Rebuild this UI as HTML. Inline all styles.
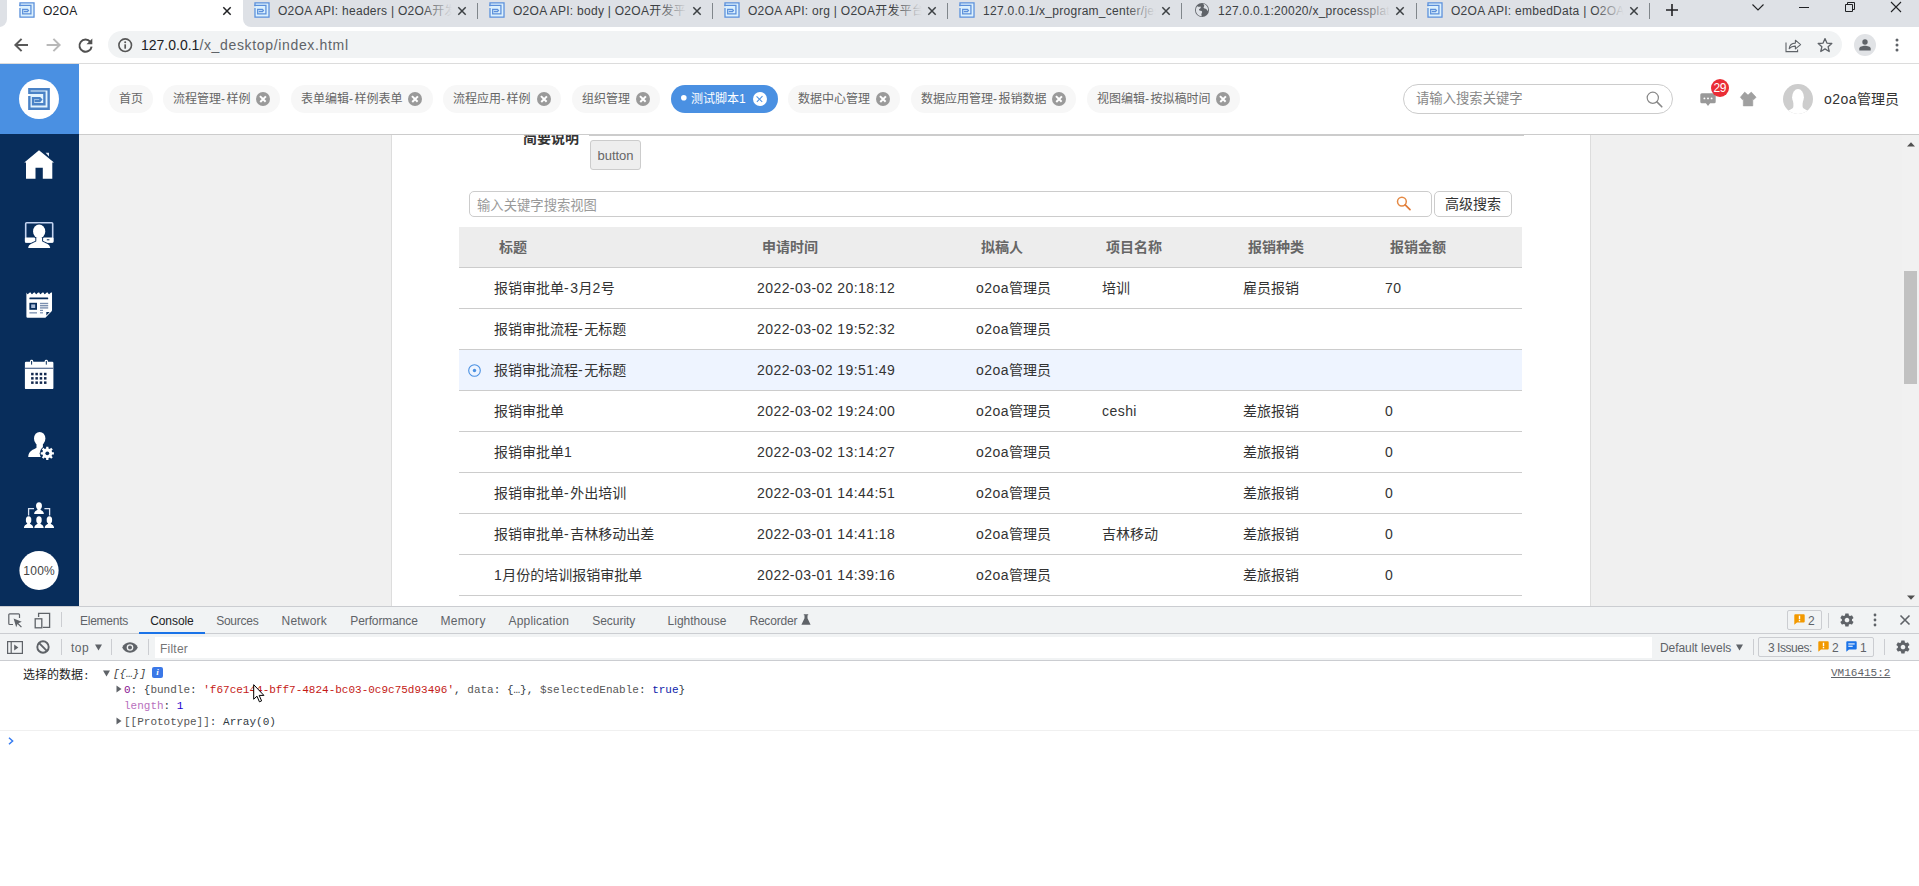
<!DOCTYPE html>
<html lang="zh-CN">
<head>
<meta charset="utf-8">
<title>O2OA</title>
<style>
*{box-sizing:border-box;margin:0;padding:0}
html,body{width:1919px;height:886px;overflow:hidden;background:#fff}
body{position:relative;font-family:"Liberation Sans","Noto Sans CJK SC",sans-serif;font-size:12px;color:#333}
.abs{position:absolute}
.t{position:absolute;white-space:nowrap;line-height:1}
svg{position:absolute;overflow:visible}

/* ===== browser chrome ===== */
#tabstrip{position:absolute;left:0;top:0;width:1919px;height:27px;background:#dee1e6}
#activetab{position:absolute;left:7px;top:-8px;width:236px;height:35px;background:#fff;border-radius:8px 8px 0 0}
.tabtxt{position:absolute;top:4px;font-size:12px;letter-spacing:0.27px;line-height:14px;color:#3c4043;white-space:nowrap;overflow:hidden;width:172px;height:14px}
.tabfade{position:absolute;top:0;width:30px;height:20px;background:linear-gradient(90deg,rgba(222,225,230,0),#dee1e6)}
.tabsep{position:absolute;top:3px;width:1px;height:16px;background:#80868b}
#toolbar{position:absolute;left:0;top:27px;width:1919px;height:36px;background:#fff}
#tbline{position:absolute;left:0;top:63px;width:1919px;height:1px;background:#dcdcdc}
#urlpill{position:absolute;left:108px;top:31px;width:1734px;height:27px;border-radius:14px;background:#f1f3f4}

/* ===== O2OA top bar ===== */
#logobox{position:absolute;left:0;top:64px;width:79px;height:70px;background:#4a90e2}
#topbar{position:absolute;left:79px;top:64px;width:1840px;height:70px;background:#fff}
#topline{position:absolute;left:79px;top:134px;width:1840px;height:1px;background:#ccc}
.pill{position:absolute;top:85px;height:28px;border-radius:14px;background:#f7f7f7;color:#666;font-size:12px;line-height:28px;white-space:nowrap;padding-left:10px}
.pill.on{background:#4a90e2;color:#fff}
.dot{display:inline-block;width:5.5px;height:5.5px;vertical-align:middle;margin:-3px 4.5px 0 0}
.px{position:absolute;top:7px;width:14px;height:14px;border-radius:50%;background:#9a9a9a}
.px:before,.px:after{content:"";position:absolute;left:6.2px;top:2.8px;width:1.6px;height:8.4px;background:#fff;transform:rotate(45deg)}
.px:after{transform:rotate(-45deg)}
.pill.on .px{background:#fff}
.pill.on .px:before,.pill.on .px:after{background:#4a90e2;width:1.2px;left:6.4px}

/* ===== sidebar ===== */
#sidebar{position:absolute;left:0;top:134px;width:79px;height:472px;background:#082d5b}

/* ===== content ===== */
#content{position:absolute;left:79px;top:135px;width:1825px;height:471px;background:#f0f0f0}
#paper{position:absolute;left:391px;top:135px;width:1200px;height:471px;background:#fff;border-left:1px solid #ddd;border-right:1px solid #ddd}
#vscroll{position:absolute;left:1902px;top:135px;width:17px;height:471px;background:#f1f1f1}
.row{position:absolute;left:459px;width:1063px;height:41px;border-bottom:1px solid #ccc;font-size:14px;color:#333}
.row .dt{letter-spacing:0.43px}
.l{font-style:normal;letter-spacing:0.45px}
.hy{font-style:normal;letter-spacing:1.5px}
.row span{position:absolute;top:0;line-height:40px;white-space:nowrap}

/* ===== devtools ===== */
#dt .bar{position:absolute;left:0;width:1919px;background:#f1f3f4}
#dt .ln{position:absolute;left:0;width:1919px;height:1px;background:#cbcdd1}
.dtab{position:absolute;top:8px;font-size:12px;line-height:14px;color:#5f6368;white-space:nowrap}
.vsep{position:absolute;width:1px;background:#cbcdd1}
.mono{position:absolute;white-space:pre;font-family:"Liberation Mono","Noto Sans CJK SC",monospace;font-size:11px;line-height:13px;color:#303942}

#dt{position:absolute;left:0;top:606px;width:1919px;height:280px;background:#fff}
</style>
</head>
<body>

<!-- ================= BROWSER TAB STRIP ================= -->
<div id="tabstrip">
  <div id="activetab"></div>
  <div class="abs" style="left:-1px;top:19px;width:8px;height:8px;background:#fff"><div style="width:8px;height:8px;background:#dee1e6;border-radius:0 0 8px 0"></div></div>
  <div class="abs" style="left:243px;top:19px;width:8px;height:8px;background:#fff"><div style="width:8px;height:8px;background:#dee1e6;border-radius:0 0 0 8px"></div></div>
  <svg style="left:19px;top:2px" width="16" height="16" viewBox="0 0 21.7 22"><rect x="0.8" y="0.8" width="20" height="20.4" fill="#dcf0fd"/><path d="M1.2,8.1V20.8H20.5V1.2H1.2V5.8M0,4.75H16.25V16.25H4.9V10.15H11.5L12.8,11.6L11.5,13.05H6.5" fill="none" stroke="#5b8fda" stroke-width="1.75"/></svg>
  <div class="tabtxt" style="left:43px;color:#202124">O2OA</div>
  <svg style="left:223px;top:6.5px" width="8" height="8" viewBox="0 0 8 8"><path d="M0.3,0.3L7.7,7.7M7.7,0.3L0.3,7.7" stroke="#202124" stroke-width="1.5" fill="none"/></svg>
  <svg style="left:254px;top:2px" width="16" height="16" viewBox="0 0 21.7 22"><rect x="0.8" y="0.8" width="20" height="20.4" fill="#dcf0fd"/><path d="M1.2,8.1V20.8H20.5V1.2H1.2V5.8M0,4.75H16.25V16.25H4.9V10.15H11.5L12.8,11.6L11.5,13.05H6.5" fill="none" stroke="#5b8fda" stroke-width="1.75"/></svg>
  <div class="tabtxt" style="left:278px;width:174px">O2OA API: headers | O2OA开发平台<span class="tabfade" style="right:0"></span></div>
  <svg style="left:458px;top:6.5px" width="8" height="8" viewBox="0 0 8 8"><path d="M0.3,0.3L7.7,7.7M7.7,0.3L0.3,7.7" stroke="#3c4043" stroke-width="1.5" fill="none"/></svg>
  <div class="tabsep" style="left:477px"></div>
  <svg style="left:489px;top:2px" width="16" height="16" viewBox="0 0 21.7 22"><rect x="0.8" y="0.8" width="20" height="20.4" fill="#dcf0fd"/><path d="M1.2,8.1V20.8H20.5V1.2H1.2V5.8M0,4.75H16.25V16.25H4.9V10.15H11.5L12.8,11.6L11.5,13.05H6.5" fill="none" stroke="#5b8fda" stroke-width="1.75"/></svg>
  <div class="tabtxt" style="left:513px;width:174px">O2OA API: body | O2OA开发平台<span class="tabfade" style="right:0"></span></div>
  <svg style="left:693px;top:6.5px" width="8" height="8" viewBox="0 0 8 8"><path d="M0.3,0.3L7.7,7.7M7.7,0.3L0.3,7.7" stroke="#3c4043" stroke-width="1.5" fill="none"/></svg>
  <div class="tabsep" style="left:712px"></div>
  <svg style="left:724px;top:2px" width="16" height="16" viewBox="0 0 21.7 22"><rect x="0.8" y="0.8" width="20" height="20.4" fill="#dcf0fd"/><path d="M1.2,8.1V20.8H20.5V1.2H1.2V5.8M0,4.75H16.25V16.25H4.9V10.15H11.5L12.8,11.6L11.5,13.05H6.5" fill="none" stroke="#5b8fda" stroke-width="1.75"/></svg>
  <div class="tabtxt" style="left:748px;width:174px">O2OA API: org | O2OA开发平台<span class="tabfade" style="right:0"></span></div>
  <svg style="left:928px;top:6.5px" width="8" height="8" viewBox="0 0 8 8"><path d="M0.3,0.3L7.7,7.7M7.7,0.3L0.3,7.7" stroke="#3c4043" stroke-width="1.5" fill="none"/></svg>
  <div class="tabsep" style="left:947px"></div>
  <svg style="left:959px;top:2px" width="16" height="16" viewBox="0 0 21.7 22"><rect x="0.8" y="0.8" width="20" height="20.4" fill="#dcf0fd"/><path d="M1.2,8.1V20.8H20.5V1.2H1.2V5.8M0,4.75H16.25V16.25H4.9V10.15H11.5L12.8,11.6L11.5,13.05H6.5" fill="none" stroke="#5b8fda" stroke-width="1.75"/></svg>
  <div class="tabtxt" style="left:983px;width:173px">127.0.0.1/x_program_center/jest/index.html<span class="tabfade" style="right:0"></span></div>
  <svg style="left:1162px;top:6.5px" width="8" height="8" viewBox="0 0 8 8"><path d="M0.3,0.3L7.7,7.7M7.7,0.3L0.3,7.7" stroke="#3c4043" stroke-width="1.5" fill="none"/></svg>
  <div class="tabsep" style="left:1181px"></div>
  <svg style="left:1194px;top:2px" width="16" height="16" viewBox="0 0 16 16"><circle cx="8" cy="8" r="7" fill="#5f6368"/><path d="M3.2,4.2C4.6,5 5.8,5 6.6,4.4C7.2,5.4 6.4,6.6 5.2,7C4.6,8.2 5.6,8.8 6.8,8.8C8.2,9 8.6,10.2 7.6,11.4C7.2,12.4 7.4,13.4 8,14.2C5,14.4 1.8,11.6 1.9,8C2,6.4 2.4,5.2 3.2,4.2ZM9,1.8C10,2.6 10.6,3.6 10,4.6C9.2,5.4 9.6,6.6 10.8,6.6C12,6.6 12.8,7.4 13.2,8.6C13.6,9 14,8.8 14.1,8C14.2,5 12,2.2 9,1.8Z" fill="#dee1e6"/></svg>
  <div class="tabtxt" style="left:1218px;width:172px">127.0.0.1:20020/x_processplatform<span class="tabfade" style="right:0"></span></div>
  <svg style="left:1396px;top:6.5px" width="8" height="8" viewBox="0 0 8 8"><path d="M0.3,0.3L7.7,7.7M7.7,0.3L0.3,7.7" stroke="#3c4043" stroke-width="1.5" fill="none"/></svg>
  <div class="tabsep" style="left:1416px"></div>
  <svg style="left:1427px;top:2px" width="16" height="16" viewBox="0 0 21.7 22"><rect x="0.8" y="0.8" width="20" height="20.4" fill="#dcf0fd"/><path d="M1.2,8.1V20.8H20.5V1.2H1.2V5.8M0,4.75H16.25V16.25H4.9V10.15H11.5L12.8,11.6L11.5,13.05H6.5" fill="none" stroke="#5b8fda" stroke-width="1.75"/></svg>
  <div class="tabtxt" style="left:1451px;width:173px">O2OA API: embedData | O2OA开发平台<span class="tabfade" style="right:0"></span></div>
  <svg style="left:1630px;top:6.5px" width="8" height="8" viewBox="0 0 8 8"><path d="M0.3,0.3L7.7,7.7M7.7,0.3L0.3,7.7" stroke="#3c4043" stroke-width="1.5" fill="none"/></svg>
  <div class="tabsep" style="left:1649px"></div>
  <svg style="left:1666px;top:4px" width="12" height="12" viewBox="0 0 12 12"><path d="M6,0V12M0,6H12" stroke="#202124" stroke-width="1.6" fill="none"/></svg>
  <svg style="left:1752px;top:4px" width="12" height="7" viewBox="0 0 12 7"><path d="M0.5,0.5L6,6L11.5,0.5" stroke="#202124" stroke-width="1.1" fill="none"/></svg>
  <div class="abs" style="left:1799px;top:7px;width:10px;height:1px;background:#202124"></div>
  <svg style="left:1845px;top:2px" width="10" height="10" viewBox="0 0 10 10"><path d="M0.5,2.5H7.5V9.5H0.5ZM2.5,2.5V0.5H9.5V7.5H7.5" stroke="#202124" stroke-width="1" fill="none"/></svg>
  <svg style="left:1891px;top:2px" width="10" height="10" viewBox="0 0 10 10"><path d="M0,0L10,10M10,0L0,10" stroke="#202124" stroke-width="1.1" fill="none"/></svg>
</div>

<!-- ================= TOOLBAR ================= -->
<div id="toolbar"></div>
<div id="urlpill"></div>
<div id="tbline"></div>
<!-- back -->
<svg style="left:14px;top:38px" width="15" height="14" viewBox="0 0 15 14"><path d="M14,7H1.800M7.600,0.900L1.400,7L7.600,13.100" fill="none" stroke="#595959" stroke-width="2"/></svg>
<!-- forward -->
<svg style="left:46px;top:38px" width="15" height="14" viewBox="0 0 15 14"><path d="M0.600,7H13.200M7.400,0.900L13.600,7L7.400,13.100" fill="none" stroke="#b9b9b9" stroke-width="2"/></svg>
<!-- reload -->
<svg style="left:77.500px;top:37.500px" width="15" height="15" viewBox="0 0 15 15"><path d="M12.300,3.800A6.100,6.100 0 1 0 13.600,8.600" fill="none" stroke="#505050" stroke-width="2"/><path d="M14.300,0.400V6.200H8.500Z" fill="#505050"/></svg>
<!-- info -->
<svg style="left:118px;top:37.800px" width="14.400" height="14.400" viewBox="0 0 14.400 14.400"><circle cx="7.200" cy="7.200" r="6.300" fill="none" stroke="#565656" stroke-width="1.600"/><path d="M7.200,6.300V10.700" stroke="#565656" stroke-width="1.700"/><circle cx="7.200" cy="4.200" r="1" fill="#565656"/></svg>
<div class="t" id="urltxt" style="left:141px;top:37px;font-size:14px;line-height:16px;color:#202124">127.0.0.1<span style="color:#5f6368;letter-spacing:0.66px">/x_desktop/index.html</span></div>
<!-- share -->
<svg style="left:1785px;top:38px" width="17" height="15" viewBox="0 0 17 15"><path d="M1,4.6V13.6H12.6V11.4" fill="none" stroke="#5f6368" stroke-width="1.1"/><path d="M4.2,10.6C4.6,7 7,5.2 10.4,5.1V2.2L15.6,6.6L10.4,10.9V8.1C7.8,8 5.8,8.8 4.2,10.6Z" fill="none" stroke="#5f6368" stroke-width="1.1" stroke-linejoin="round"/></svg>
<!-- star -->
<svg style="left:1817px;top:37px" width="16" height="16" viewBox="0 0 16 16"><path d="M8,1.6L9.9,6.1L14.8,6.5L11.1,9.7L12.2,14.5L8,11.9L3.8,14.5L4.9,9.7L1.2,6.5L6.1,6.1Z" fill="none" stroke="#5f6368" stroke-width="1.3" stroke-linejoin="round"/></svg>
<!-- profile -->
<div class="abs" style="left:1854px;top:34px;width:22px;height:22px;border-radius:50%;background:#e1e3e6"></div>
<svg style="left:1859px;top:39px" width="12" height="12" viewBox="0 0 12 12"><circle cx="6" cy="3" r="2.7" fill="#5f6368"/><path d="M0.3,11.6V9.6C0.3,7.6 3.6,6.7 6,6.7C8.4,6.7 11.7,7.6 11.7,9.6V11.6Z" fill="#5f6368"/></svg>
<!-- menu dots -->
<svg style="left:1895px;top:38px" width="4" height="14" viewBox="0 0 4 14"><circle cx="2" cy="2" r="1.5" fill="#5f6368"/><circle cx="2" cy="7" r="1.5" fill="#5f6368"/><circle cx="2" cy="12" r="1.5" fill="#5f6368"/></svg>

<!-- ================= O2OA TOP BAR ================= -->
<div id="logobox"></div>
<div class="abs" style="left:19px;top:79px;width:40px;height:40px;border-radius:50%;background:#fff"></div>
<svg style="left:28px;top:88px" width="22" height="22" viewBox="0 0 21.7 22"><rect x="1.2" y="1.2" width="19.3" height="19.6" fill="#e4f4fe"/><path d="M1.2,8.1V20.8H20.5V1.2H1.2V5.8M0,4.75H16.25V16.25H4.9V10.15H11.5L12.8,11.6L11.5,13.05H6.5" fill="none" stroke="#4a82c6" stroke-width="2.4"/></svg>
<div id="topbar"></div>
<div id="topline"></div>
<div class="pill" style="left:109px;width:44px">首页</div>
<div class="pill" style="left:163px;width:117px">流程管理<i class="hy" style="letter-spacing:1.4px">-</i>样例<i class="px" style="left:93.0px"></i></div>
<div class="pill" style="left:291px;width:142px">表单编辑<i class="hy" style="letter-spacing:1.4px">-</i>样例表单<i class="px" style="left:117.0px"></i></div>
<div class="pill" style="left:443px;width:118px">流程应用<i class="hy" style="letter-spacing:1.4px">-</i>样例<i class="px" style="left:94.0px"></i></div>
<div class="pill" style="left:572px;width:88px">组织管理<i class="px" style="left:64.0px"></i></div>
<div class="pill on" style="left:671px;width:107px"><svg style="left:9.800px;top:10.100px" width="6" height="6" viewBox="0 0 6 6"><circle cx="2.800" cy="2.800" r="2.800" fill="#fff"/></svg><i class="dot"></i>测试脚本1<i class="px" style="left:82.0px"></i></div>
<div class="pill" style="left:788px;width:112px">数据中心管理<i class="px" style="left:88.0px"></i></div>
<div class="pill" style="left:911px;width:165px">数据应用管理<i class="hy" style="letter-spacing:1.4px">-</i>报销数据<i class="px" style="left:141.0px"></i></div>
<div class="pill" style="left:1087px;width:153px">视图编辑<i class="hy" style="letter-spacing:1.4px">-</i>按拟稿时间<i class="px" style="left:129.0px"></i></div>
<div class="abs" style="left:1403px;top:84px;width:270px;height:30px;border:1px solid #ccc;border-radius:15px;background:#fff"></div>
<div class="t" style="left:1416px;top:91px;font-size:13.33px;line-height:15px;color:#888">请输入搜索关键字</div>
<svg style="left:1646px;top:91px" width="17" height="17" viewBox="0 0 17 17"><circle cx="6.8" cy="6.8" r="5.6" fill="none" stroke="#888" stroke-width="1.2"/><path d="M10.9,10.9L15.8,15.8" stroke="#888" stroke-width="1.6" stroke-linecap="round"/></svg>
<!-- message -->
<svg style="left:1700px;top:92.500px" width="16" height="14" viewBox="0 0 16 14"><path d="M1.800,0.300H14.200A1.500,1.500 0 0 1 15.700,1.800V8.800A1.500,1.500 0 0 1 14.200,10.300H10.100L8,13L5.900,10.300H1.800A1.500,1.500 0 0 1 0.300,8.800V1.800A1.500,1.500 0 0 1 1.800,0.300Z" fill="#999"/><circle cx="4.400" cy="5.400" r="0.950" fill="#fff"/><circle cx="8" cy="5.400" r="0.950" fill="#fff"/><circle cx="11.600" cy="5.400" r="0.950" fill="#fff"/></svg>
<div class="abs" style="left:1711px;top:79px;width:18px;height:18px;border-radius:50%;background:#ea2d36;color:#fff;font-size:12px;line-height:18px;text-align:center;letter-spacing:-0.300px;text-indent:-0.300px">29</div>
<!-- tshirt -->
<svg style="left:1740px;top:92px" width="17" height="15" viewBox="1740 92 17 15"><path d="M1744.700,92.100L1748,95.100L1751.300,92.100L1756.100,97.200L1753.700,99.700L1752.800,99V105.900H1743.300V99L1742.400,99.700L1740.400,97.200Z" fill="#a0a0a0" stroke="#a0a0a0" stroke-width="0.600" stroke-linejoin="round"/></svg>
<!-- avatar -->
<div class="abs" style="left:1783px;top:84px;width:30px;height:30px;border-radius:50%;background:#cdcdcd;overflow:hidden"><svg style="left:0;top:0" width="30" height="30" viewBox="0 0 30 30"><ellipse cx="15" cy="13.300" rx="5.900" ry="8.200" fill="#fff"/><path d="M10.300,17C10.300,21 10.900,23 9.600,24.200C7.600,25.500 4.600,26.200 3,30H27C25.400,26.200 22.400,25.500 20.400,24.200C19.100,23 19.700,21 19.700,17Z" fill="#fff"/></svg></div>
<div class="t" style="left:1824px;top:91px;font-size:14px;line-height:16px;color:#333"><i class="l">o2oa</i>管理员</div>

<!-- ================= SIDEBAR ================= -->
<div id="sidebar"></div>
<svg style="left:0;top:134px" width="79" height="472" viewBox="0 134 79 472">
<path d="M39,150.3L54,162.6H52.3V178.7H42.8V167.8H35.5V178.7H26V162.6H24.3Z" fill="#fff"/><path d="M45.6,152.8H49V156.4Z" fill="#dfe8f5"/>
<rect x="25.700" y="222.700" width="27" height="19.300" rx="1" fill="none" stroke="#c3d3f1" stroke-width="1.600"/><rect x="24.900" y="237.600" width="28.600" height="5.200" rx="1" fill="#fff"/><rect x="46.800" y="239.300" width="2.600" height="1" fill="#082d5b"/><g stroke="#082d5b" stroke-width="2" stroke-linejoin="round"><ellipse cx="39.150" cy="231.400" rx="6.100" ry="6.800" fill="#fff"/><path d="M28.2,247.9C28.6,243.7 33.4,243.4 36.3,241.3V237.5H42.1V241.3C45,243.4 49.800,243.700 50.200,247.900Z" fill="#fff"/></g><ellipse cx="39.150" cy="231.400" rx="6.100" ry="6.800" fill="#fff"/><path d="M28.2,247.9C28.6,243.7 33.4,243.4 36.3,241.3V237.5H42.1V241.3C45,243.4 49.800,243.700 50.200,247.900Z" fill="#fff"/>
<path d="M26.4,292.6Q27.47,295.2 28.53,293.6Q29.60,292 30.67,292.6Q31.74,295.2 32.80,293.6Q33.87,292 34.94,292.6Q36.01,295.2 37.07,293.6Q38.14,292 39.21,292.6Q40.28,295.2 41.34,293.6Q42.41,292 43.48,292.6Q44.55,295.2 45.61,293.6Q46.68,292 47.75,292.6Q48.82,295.2 49.88,293.6Q50.95,292 52.02,292.6V310.6L45.2,317.8H27.6A1.2,1.2 0 0 1 26.4,316.6Z" fill="#fff"/>
<path d="M45.2,317.8V310.8H52Z" fill="#fff"/><path d="M46.3,315.4V311.9H49.7Z" fill="#082d5b"/>
<rect x="29.4" y="297.4" width="18.8" height="1.9" rx="0.6" fill="#082d5b"/>
<rect x="29.4" y="302.8" width="7.6" height="7" fill="#082d5b"/><rect x="31.2" y="304.4" width="4" height="3.6" fill="#a8bbd8"/>
<rect x="40" y="302.8" width="8.2" height="1.4" fill="#7b8fb0"/>
<rect x="40" y="305" width="8.2" height="1.4" fill="#7b8fb0"/>
<rect x="40" y="307.2" width="8.2" height="1.4" fill="#7b8fb0"/>
<rect x="40" y="309.8" width="3" height="1.2" fill="#7b8fb0"/><rect x="40" y="312.2" width="3" height="1.2" fill="#7b8fb0"/>
<rect x="29.4" y="312.2" width="7.6" height="1.3" fill="#7b8fb0"/>
<rect x="24.9" y="361.8" width="28.5" height="27.3" rx="1.2" fill="#fff"/>
<rect x="24.9" y="367.7" width="28.5" height="1.2" fill="#53698f"/>
<rect x="30.0" y="359.8" width="3.2" height="5.2" rx="1.4" fill="#fff"/><rect x="31.1" y="361" width="1" height="3.6" fill="#082d5b"/>
<rect x="44.699999999999996" y="359.8" width="3.2" height="5.2" rx="1.4" fill="#fff"/><rect x="45.8" y="361" width="1" height="3.6" fill="#082d5b"/>
<rect x="31.1" y="372.8" width="2.5" height="2.5" fill="#13294f"/>
<rect x="35.4" y="372.8" width="2.5" height="2.5" fill="#13294f"/>
<rect x="39.7" y="372.8" width="2.5" height="2.5" fill="#13294f"/>
<rect x="44.0" y="372.8" width="2.5" height="2.5" fill="#13294f"/>
<rect x="31.1" y="377.1" width="2.5" height="2.5" fill="#13294f"/>
<rect x="35.4" y="377.1" width="2.5" height="2.5" fill="#13294f"/>
<rect x="39.7" y="377.1" width="2.5" height="2.5" fill="#13294f"/>
<rect x="44.0" y="377.1" width="2.5" height="2.5" fill="#13294f"/>
<rect x="31.1" y="381.4" width="2.5" height="2.5" fill="#13294f"/>
<rect x="35.4" y="381.4" width="2.5" height="2.5" fill="#13294f"/>
<rect x="39.7" y="381.4" width="2.5" height="2.5" fill="#13294f"/>
<rect x="44.0" y="381.4" width="2.5" height="2.5" fill="#13294f"/>
<ellipse cx="39.700" cy="438.600" rx="5.700" ry="6.700" fill="#fff"/><path d="M36.500,443.500V447.800C33.500,449.800 28.600,450.600 28.200,456.900H46V449C44.500,448.600 43.200,448.200 42.900,447.800V443.500Z" fill="#fff"/>
<circle cx="47.3" cy="453.3" r="7.6" fill="#082d5b"/>
<path d="M53.90,452.15L53.90,454.45L52.16,454.47L51.56,455.91L52.78,457.15L51.15,458.78L49.91,457.56L48.47,458.16L48.45,459.90L46.15,459.90L46.13,458.16L44.69,457.56L43.45,458.78L41.82,457.15L43.04,455.91L42.44,454.47L40.70,454.45L40.70,452.15L42.44,452.13L43.04,450.69L41.82,449.45L43.45,447.82L44.69,449.04L46.13,448.44L46.15,446.70L48.45,446.70L48.47,448.44L49.91,449.04L51.15,447.82L52.78,449.45L51.56,450.69L52.16,452.13Z" fill="#fff"/><circle cx="47.3" cy="453.3" r="1.9" fill="#082d5b"/>
<path d="M34,508.6H28.6V515.4M44.4,508.6H49.6V515.4" fill="none" stroke="#dbe4f3" stroke-width="1.3"/>
<ellipse cx="39" cy="505.86" rx="2.94" ry="3.66" fill="#fff"/><path d="M37.53,508.42V509.75C36.06,510.93 34.10,511.40 34.10,514.00H43.90C43.90,511.40 41.94,510.93 40.47,509.75V508.42Z" fill="#fff"/>
<ellipse cx="28.6" cy="519.94" rx="2.73" ry="3.74" fill="#fff"/><path d="M27.24,522.56V523.69C25.78,524.86 23.90,525.33 23.90,527.90H33.30C33.30,525.33 31.42,524.86 29.96,523.69V522.56Z" fill="#fff"/>
<ellipse cx="39" cy="519.94" rx="2.73" ry="3.74" fill="#fff"/><path d="M37.64,522.56V523.69C36.18,524.86 34.30,525.33 34.30,527.90H43.70C43.70,525.33 41.82,524.86 40.36,523.69V522.56Z" fill="#fff"/>
<ellipse cx="49.4" cy="519.94" rx="2.73" ry="3.74" fill="#fff"/><path d="M48.04,522.56V523.69C46.58,524.86 44.70,525.33 44.70,527.90H54.10C54.10,525.33 52.22,524.86 50.76,523.69V522.56Z" fill="#fff"/>
<circle cx="39" cy="570.5" r="19.6" fill="#fff"/>
</svg>
<div class="t" style="left:19px;top:564px;width:40px;text-align:center;font-size:12px;line-height:15px;color:#444;letter-spacing:0.3px;text-indent:0.3px">100%</div>

<!-- ================= CONTENT ================= -->
<div id="content"></div>
<div id="paper"></div>
<div class="abs" style="left:459px;top:135px;width:1065px;height:20px;overflow:hidden"><div class="t" style="left:64px;top:-5px;font-size:14px;line-height:16px;font-weight:bold;color:#333">简要说明</div></div>
<div class="abs" style="left:589px;top:135px;width:935px;height:1px;background:#ccc"></div>
<div class="abs" style="left:590px;top:140px;width:51px;height:30px;border:1px solid #ccc;border-radius:3px;background:#eee;color:#666;font-size:13px;line-height:30px;text-align:center">button</div>
<div class="abs" style="left:469px;top:191px;width:963px;height:26px;border:1px solid #ccc;border-radius:5px;background:#fff"></div>
<div class="t" style="left:477px;top:197.5px;font-size:13.33px;line-height:16px;color:#999">输入关键字搜索视图</div>
<svg style="left:1396px;top:196px" width="16" height="16" viewBox="0 0 16 16"><circle cx="5.900" cy="5.600" r="4.400" fill="none" stroke="#e58a45" stroke-width="1.500"/><path d="M9.200,8.900L14,13.700" stroke="#e07a38" stroke-width="1.700" stroke-linecap="round"/></svg>
<div class="abs" style="left:1434px;top:191px;width:78px;height:26px;border:1px solid #ccc;border-radius:5px;background:#fff;color:#333;font-size:14px;line-height:24px;text-align:center">高级搜索</div>
<div class="abs" id="thead" style="left:459px;top:227px;width:1063px;height:41px;background:#ededed;border-bottom:1px solid #ccc;font-size:14px;font-weight:bold;color:#666"><span class="t" style="left:40px;top:12px;line-height:16px">标题</span><span class="t" style="left:303px;top:12px;line-height:16px">申请时间</span><span class="t" style="left:522px;top:12px;line-height:16px">拟稿人</span><span class="t" style="left:647px;top:12px;line-height:16px">项目名称</span><span class="t" style="left:789px;top:12px;line-height:16px">报销种类</span><span class="t" style="left:931px;top:12px;line-height:16px">报销金额</span></div>
<div class="row" style="top:268px"><span style="left:35px">报销审批单<i class="hy">-</i><i class="l">3</i>月<i class="l">2</i>号</span><span class="dt" style="left:298px">2022-03-02 20:18:12</span><span style="left:517px"><i class="l">o2oa</i>管理员</span><span style="left:643px">培训</span><span style="left:784px">雇员报销</span><span style="left:926px"><i class="l">70</i></span></div>
<div class="row" style="top:309px"><span style="left:35px">报销审批流程<i class="hy">-</i>无标题</span><span class="dt" style="left:298px">2022-03-02 19:52:32</span><span style="left:517px"><i class="l">o2oa</i>管理员</span><span style="left:643px"></span><span style="left:784px"></span><span style="left:926px"></span></div>
<div class="row" style="top:350px;background:#eef4ff"><svg style="left:9px;top:14px" width="13" height="13" viewBox="0 0 13 13"><circle cx="6.5" cy="6.5" r="5.8" fill="none" stroke="#4a90e2" stroke-width="1.1"/><circle cx="6.5" cy="6.5" r="1.7" fill="#4a90e2"/></svg><span style="left:35px">报销审批流程<i class="hy">-</i>无标题</span><span class="dt" style="left:298px">2022-03-02 19:51:49</span><span style="left:517px"><i class="l">o2oa</i>管理员</span><span style="left:643px"></span><span style="left:784px"></span><span style="left:926px"></span></div>
<div class="row" style="top:391px"><span style="left:35px">报销审批单</span><span class="dt" style="left:298px">2022-03-02 19:24:00</span><span style="left:517px"><i class="l">o2oa</i>管理员</span><span style="left:643px"><i class="l">ceshi</i></span><span style="left:784px">差旅报销</span><span style="left:926px"><i class="l">0</i></span></div>
<div class="row" style="top:432px"><span style="left:35px">报销审批单<i class="l">1</i></span><span class="dt" style="left:298px">2022-03-02 13:14:27</span><span style="left:517px"><i class="l">o2oa</i>管理员</span><span style="left:643px"></span><span style="left:784px">差旅报销</span><span style="left:926px"><i class="l">0</i></span></div>
<div class="row" style="top:473px"><span style="left:35px">报销审批单<i class="hy">-</i>外出培训</span><span class="dt" style="left:298px">2022-03-01 14:44:51</span><span style="left:517px"><i class="l">o2oa</i>管理员</span><span style="left:643px"></span><span style="left:784px">差旅报销</span><span style="left:926px"><i class="l">0</i></span></div>
<div class="row" style="top:514px"><span style="left:35px">报销审批单<i class="hy">-</i>吉林移动出差</span><span class="dt" style="left:298px">2022-03-01 14:41:18</span><span style="left:517px"><i class="l">o2oa</i>管理员</span><span style="left:643px">吉林移动</span><span style="left:784px">差旅报销</span><span style="left:926px"><i class="l">0</i></span></div>
<div class="row" style="top:555px"><span style="left:35px"><i class="l">1</i>月份的培训报销审批单</span><span class="dt" style="left:298px">2022-03-01 14:39:16</span><span style="left:517px"><i class="l">o2oa</i>管理员</span><span style="left:643px"></span><span style="left:784px">差旅报销</span><span style="left:926px"><i class="l">0</i></span></div>
<div id="vscroll"></div>
<div class="abs" style="left:1904px;top:271px;width:13px;height:113px;background:#c1c1c1"></div>
<svg style="left:1906.5px;top:142px" width="8" height="5" viewBox="0 0 8 5"><path d="M0,4.600L4,0.200L8,4.600Z" fill="#505050"/></svg>
<svg style="left:1906.5px;top:594.500px" width="8" height="5" viewBox="0 0 8 5"><path d="M0,0.400L4,4.800L8,0.400Z" fill="#505050"/></svg>

<!-- ================= DEVTOOLS ================= -->
<div id="dt">
<div class="ln" style="top:0"></div>
<div class="bar" style="top:1px;height:26px"></div>
<div class="ln" style="top:27px"></div>
<div class="bar" style="top:28px;height:26px"></div>
<div class="ln" style="top:54px;background:#cbcdd1"></div>
<svg style="left:8px;top:7px" width="15" height="15" viewBox="0 0 15 15"><path d="M11.500,5V1.700A0.900,0.900 0 0 0 10.600,0.800H1.700A0.900,0.900 0 0 0 0.800,1.700V10.600A0.900,0.900 0 0 0 1.700,11.500H5" fill="none" stroke="#5f6368" stroke-width="1.200"/><path d="M5.600,5.600L13.800,8.700L10.400,10.200L13.900,13.700L13,14.600L9.500,11.100L8.200,14.200Z" fill="#5f6368"/></svg>
<svg style="left:34px;top:6px" width="17" height="17" viewBox="0 0 17 17"><path d="M4.600,5V1.400H15.600V15.400H8.800" fill="none" stroke="#5f6368" stroke-width="1.300"/><rect x="1.200" y="6.800" width="6.600" height="9" fill="none" stroke="#5f6368" stroke-width="1.300"/></svg>
<div class="vsep" style="left:61px;top:6px;height:15px"></div>
<div class="dtab" style="left:80px;letter-spacing:-0.25px">Elements</div>
<div class="dtab" style="left:150.2px;color:#202124;letter-spacing:-0.08px">Console</div>
<div class="dtab" style="left:216.2px;letter-spacing:-0.25px">Sources</div>
<div class="dtab" style="left:281.5px;letter-spacing:0.21px">Network</div>
<div class="dtab" style="left:350.3px;letter-spacing:-0.11px">Performance</div>
<div class="dtab" style="left:440.4px;letter-spacing:0.34px">Memory</div>
<div class="dtab" style="left:508.5px;letter-spacing:0.18px">Application</div>
<div class="dtab" style="left:592.2px;letter-spacing:-0.03px">Security</div>
<div class="dtab" style="left:667.6px;letter-spacing:0.0px">Lighthouse</div>
<div class="dtab" style="left:749.4px;letter-spacing:-0.18px">Recorder</div>
<svg style="left:801px;top:8px" width="10" height="11" viewBox="0 0 10 11"><path d="M2.800,0.300H7.200V1.300H6.500V4.200L9.600,10.700H0.400L3.500,4.200V1.300H2.800Z" fill="#5f6368"/></svg>
<div class="abs" style="left:139px;top:26px;width:66px;height:2px;background:#1a73e8"></div>
<div class="abs" style="left:1787px;top:4px;width:35px;height:20px;border:1px solid #cbcdd1;border-radius:2px"></div>
<svg style="left:1794px;top:8px" width="11" height="11" viewBox="0 0 11 11"><path d="M1.200,0.300H9.800A0.900,0.900 0 0 1 10.700,1.200V7.600A0.900,0.900 0 0 1 9.800,8.500H3L0.300,10.800V1.200A0.900,0.900 0 0 1 1.200,0.300Z" fill="#f29900"/><rect x="4.800" y="1.700" width="1.400" height="3.600" fill="#fff"/><rect x="4.800" y="6" width="1.400" height="1.300" fill="#fff"/></svg>
<div class="dtab" style="left:1808px;top:8px">2</div>
<div class="vsep" style="left:1828px;top:7px;height:15px"></div>
<svg style="left:1838.600px;top:6px" width="16" height="16" viewBox="0 0 24 24"><path d="M19.4,13c0-.3.1-.6.1-1s0-.7-.1-1l2.100-1.600c.2-.100.200-.4.100-.6l-2-3.500c-.1-.2-.4-.3-.6-.2l-2.500,1c-.5-.4-1.100-.7-1.700-1l-.4-2.600c0-.2-.2-.4-.5-.4h-4c-.2,0-.5.200-.5.400l-.4,2.600c-.6.300-1.200.600-1.700,1l-2.500-1c-.2-.1-.5,0-.6.200l-2,3.500c-.1.200-.1.500.100.600l2.100,1.600c0,.3-.1.700-.1,1s0,.7.100,1l-2.100,1.600c-.2.100-.2.400-.1.600l2,3.500c.1.200.4.300.6.200l2.500-1c.5.400,1.100.7,1.700,1l.4,2.600c0,.2.200.4.500.4h4c.2,0,.5-.2.500-.4l.4-2.600c.6-.3,1.200-.6,1.700-1l2.500,1c.2.100.5,0,.6-.2l2-3.500c.1-.2.100-.5-.1-.6l-2.100-1.600zM12,15.500c-1.900,0-3.500-1.600-3.500-3.500s1.600-3.500,3.500-3.500,3.500,1.600,3.500,3.500-1.600,3.500-3.500,3.500z" fill="#5f6368"/></svg>
<svg style="left:1873px;top:7px" width="4" height="14" viewBox="0 0 4 14"><circle cx="2" cy="2" r="1.400" fill="#5f6368"/><circle cx="2" cy="7" r="1.400" fill="#5f6368"/><circle cx="2" cy="12" r="1.400" fill="#5f6368"/></svg>
<svg style="left:1900px;top:9px" width="10" height="10" viewBox="0 0 10 10"><path d="M0.500,0.500L9.500,9.500M9.500,0.500L0.500,9.500" stroke="#5f6368" stroke-width="1.600" fill="none"/></svg>
<svg style="left:7px;top:35px" width="16" height="13" viewBox="0 0 16 13"><rect x="0.600" y="0.600" width="14.800" height="11.800" fill="none" stroke="#5f6368" stroke-width="1.200"/><path d="M4.200,0.600V12.400" stroke="#5f6368" stroke-width="1.200"/><path d="M7.200,3.400L11.400,6.500L7.200,9.600Z" fill="#5f6368"/></svg>
<svg style="left:36px;top:34px" width="14" height="14" viewBox="0 0 14 14"><circle cx="7" cy="7" r="5.700" fill="none" stroke="#5f6368" stroke-width="1.900"/><path d="M2.900,2.900L11.100,11.100" stroke="#5f6368" stroke-width="1.900"/></svg>
<div class="vsep" style="left:61px;top:33px;height:16px"></div>
<div class="dtab" style="left:71px;top:35px;letter-spacing:0.44px">top</div>
<svg style="left:95px;top:38px" width="7" height="7" viewBox="0 0 7 7"><path d="M0,0.500H7L3.500,6.500Z" fill="#5f6368"/></svg>
<div class="vsep" style="left:111px;top:33px;height:16px"></div>
<svg style="left:122px;top:36px" width="16" height="11" viewBox="0 0 16 11"><path d="M8,0.300C4.400,0.300 1.500,2.500 0.200,5.500C1.500,8.500 4.400,10.700 8,10.700C11.600,10.700 14.500,8.500 15.800,5.500C14.500,2.500 11.600,0.300 8,0.300Z" fill="#5f6368"/><circle cx="8" cy="5.500" r="3.300" fill="#f1f3f4"/><circle cx="8" cy="5.500" r="2" fill="#5f6368"/></svg>
<div class="vsep" style="left:148px;top:33px;height:16px"></div>
<div class="abs" style="left:155px;top:31px;width:1497px;height:21px;background:#fff"></div>
<div class="dtab" style="left:160px;top:36px;color:#757575;letter-spacing:0.22px">Filter</div>
<div class="dtab" style="left:1660px;top:35px;letter-spacing:-0.06px">Default levels</div>
<svg style="left:1736px;top:38px" width="7" height="7" viewBox="0 0 7 7"><path d="M0,0.500H7L3.500,6.500Z" fill="#5f6368"/></svg>
<div class="vsep" style="left:1753px;top:33px;height:16px"></div>
<div class="abs" style="left:1758px;top:31px;width:116px;height:20px;border:1px solid #cbcdd1;border-radius:2px"></div>
<div class="dtab" style="left:1768px;top:35px;letter-spacing:-0.45px">3 Issues:</div>
<svg style="left:1818px;top:35px" width="11" height="11" viewBox="0 0 11 11"><path d="M1.200,0.300H9.800A0.900,0.900 0 0 1 10.700,1.200V7.600A0.900,0.900 0 0 1 9.800,8.500H3L0.300,10.800V1.200A0.900,0.900 0 0 1 1.200,0.300Z" fill="#f29900"/><rect x="4.800" y="1.700" width="1.400" height="3.600" fill="#fff"/><rect x="4.800" y="6" width="1.400" height="1.300" fill="#fff"/></svg>
<div class="dtab" style="left:1832px;top:35px">2</div>
<svg style="left:1846px;top:35px" width="11" height="11" viewBox="0 0 11 11"><path d="M1.200,0.300H9.800A0.900,0.900 0 0 1 10.700,1.200V7.600A0.900,0.900 0 0 1 9.800,8.500H3L0.300,10.800V1.200A0.900,0.900 0 0 1 1.200,0.300Z" fill="#1a73e8"/><rect x="2.300" y="2.400" width="6.400" height="1.100" fill="#fff"/><rect x="2.300" y="4.700" width="4.400" height="1.100" fill="#fff"/></svg>
<div class="dtab" style="left:1860px;top:35px">1</div>
<div class="vsep" style="left:1884px;top:33px;height:16px"></div>
<svg style="left:1894.700px;top:33px" width="16" height="16" viewBox="0 0 24 24"><path d="M19.4,13c0-.3.1-.6.1-1s0-.7-.1-1l2.100-1.600c.2-.100.200-.4.100-.6l-2-3.500c-.1-.2-.4-.3-.6-.2l-2.500,1c-.5-.4-1.100-.7-1.700-1l-.4-2.600c0-.2-.2-.4-.5-.4h-4c-.2,0-.5.200-.5.400l-.4,2.600c-.6.300-1.200.600-1.700,1l-2.500-1c-.2-.1-.5,0-.6.200l-2,3.500c-.1.200-.1.500.100.600l2.100,1.600c0,.3-.1.700-.1,1s0,.7.100,1l-2.100,1.600c-.2.100-.2.400-.1.600l2,3.500c.1.200.4.300.6.200l2.500-1c.5.400,1.100.7,1.700,1l.4,2.600c0,.2.200.4.500.4h4c.2,0,.5-.2.500-.4l.4-2.600c.6-.3,1.200-.6,1.700-1l2.500,1c.2.100.5,0,.6-.2l2-3.500c.1-.2.100-.5-.1-.6l-2.100-1.600zM12,15.500c-1.900,0-3.500-1.600-3.500-3.500s1.600-3.500,3.500-3.500,3.500,1.600,3.500,3.500-1.600,3.500-3.500,3.500z" fill="#5f6368"/></svg>
<div class="t" style="left:23px;top:62px;font-size:12px;line-height:14px;color:#222">选择的数据<span style="font-family:'Liberation Mono',monospace;font-size:11px">:</span></div>
<svg style="left:103px;top:64px" width="7" height="7" viewBox="0 0 7 7"><path d="M0,0.500H7L3.500,6.500Z" fill="#5f6368"/></svg>
<div class="mono" style="left:113px;top:62px;font-style:italic;color:#444">[{…}]</div>
<div class="abs" style="left:152px;top:61px;width:11px;height:11px;border-radius:2px;background:#3b78e7;color:#fff;font:bold italic 9px/11px 'Liberation Serif',serif;text-align:center">i</div>
<svg style="left:116px;top:79px" width="6" height="8" viewBox="0 0 6 8"><path d="M0.500,0.500V7.500L5.500,4Z" fill="#5f6368"/></svg>
<div class="mono" style="left:124px;top:78px"><span style="color:#881391">0</span>: {<span style="color:#565656">bundle</span>: <span style="color:#c41a16">'f67ce144-bff7-4824-bc03-0c9c75d93496'</span>, <span style="color:#565656">data</span>: {…}, <span style="color:#565656">$selectedEnable</span>: <span style="color:#0d22aa">true</span>}</div>
<div class="mono" style="left:124px;top:94px"><span style="color:#b871bd">length</span>: <span style="color:#1c00cf">1</span></div>
<svg style="left:116px;top:111px" width="6" height="8" viewBox="0 0 6 8"><path d="M0.500,0.500V7.500L5.500,4Z" fill="#5f6368"/></svg>
<div class="mono" style="left:124px;top:110px"><span style="color:#565656">[[Prototype]]</span>: Array(0)</div>
<div class="mono" style="left:1831px;top:61px;color:#5f6368;text-decoration:underline">VM16415:2</div>
<div class="abs" style="left:0;top:124px;width:1919px;height:1px;background:#f0f0f0"></div>
<svg style="left:8px;top:131px" width="6" height="8" viewBox="0 0 6 8"><path d="M1,0.800L4.600,4L1,7.200" fill="none" stroke="#367cf1" stroke-width="1.500"/></svg>
<svg style="left:253px;top:78px" width="12" height="19" viewBox="0 0 12 19"><path d="M0.700,0.700V15.200L4,12.200L6.400,17.800L8.600,16.900L6.200,11.400H10.900Z" fill="#fff" stroke="#000" stroke-width="1"/></svg>
</div>

</body>
</html>
